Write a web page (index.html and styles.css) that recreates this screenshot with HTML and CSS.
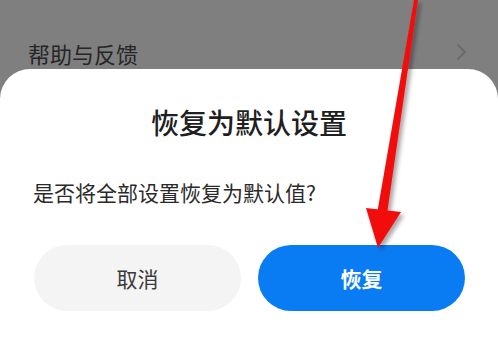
FILE: index.html
```html
<!DOCTYPE html>
<html lang="zh-CN">
<head>
    <meta charset="UTF-8">
    <meta name="viewport" content="width=device-width, initial-scale=1.0">
    <title>恢复为默认设置</title>
    <link rel="stylesheet" href="styles.css">
</head>
<body>
    <div class="list-item">
        <span class="item-label">帮助与反馈</span>
        <svg class="chevron" width="12" height="18" viewBox="0 0 12 18">
            <path d="M2 2 L9 9 L2 16" fill="none" stroke="#6b6b6b" stroke-width="2" stroke-linecap="round" stroke-linejoin="round"/>
        </svg>
    </div>

    <!-- Hoja de diálogo -->
    <div class="sheet">
        <h2 class="sheet-title">恢复为默认设置</h2>
        <p class="sheet-msg">是否将全部设置恢复为默认值?</p>
        <div class="actions">
            <button class="btn btn-cancel">取消</button>
            <button class="btn btn-ok">恢复</button>
        </div>
    </div>

    <!-- Flecha roja de anotación -->
    <svg class="arrow" width="498" height="337" viewBox="0 0 498 337">
        <defs>
            <filter id="shadow" x="-50%" y="-10%" width="200%" height="130%">
                <feDropShadow dx="3" dy="3" stdDeviation="2" flood-color="#000" flood-opacity="0.35"/>
            </filter>
        </defs>
        <g filter="url(#shadow)" fill="#f20c0c">
            <polygon points="414,0 418,0 387,214 377,214"/>
            <polygon points="366,208 401,212 378,248"/>
        </g>
    </svg>
</body>
</html>
```

FILE: styles.css
```css
/* Estilos generales */
* {
    margin: 0;
    padding: 0;
    box-sizing: border-box;
}

body {
    font-family: 'Noto Sans CJK SC', 'Noto Sans', sans-serif;
    background-color: #7f7f7f;
    width: 498px;
    height: 337px;
    overflow: hidden;
    position: relative;
}

/* Fila de la lista de fondo */
.list-item {
    display: flex;
    align-items: center;
    justify-content: space-between;
    padding: 37px 30px 0 28px;
    height: 69px;
}

.item-label {
    font-size: 22px;
    line-height: 30px;
    color: #262626;
}

.chevron {
    margin-top: -2px;
}

/* Hoja */
.sheet {
    background-color: #fff;
    border-radius: 30px 30px 0 0;
    height: 268px;
    padding-top: 33px;
}

.sheet-title {
    text-align: center;
    font-size: 28px;
    line-height: 40px;
    font-weight: 500;
    color: #1f1f1f;
}

.sheet-msg {
    margin-top: 35px;
    padding-left: 33px;
    font-size: 21px;
    line-height: 30px;
    color: #2a2a2a;
}

.actions {
    display: flex;
    gap: 17px;
    padding: 0 33px 0 34px;
    margin-top: 38px;
}

.btn {
    flex: 1;
    height: 66px;
    border: none;
    border-radius: 33px;
    font-family: inherit;
    font-size: 21px;
}

.btn-cancel {
    background-color: #f4f4f4;
    color: #3a3a3a;
}

.btn-ok {
    background-color: #0a7cf3;
    color: #fff;
    font-weight: 700;
}

/* Anotación */
.arrow {
    position: absolute;
    top: 0;
    left: 0;
}
```
